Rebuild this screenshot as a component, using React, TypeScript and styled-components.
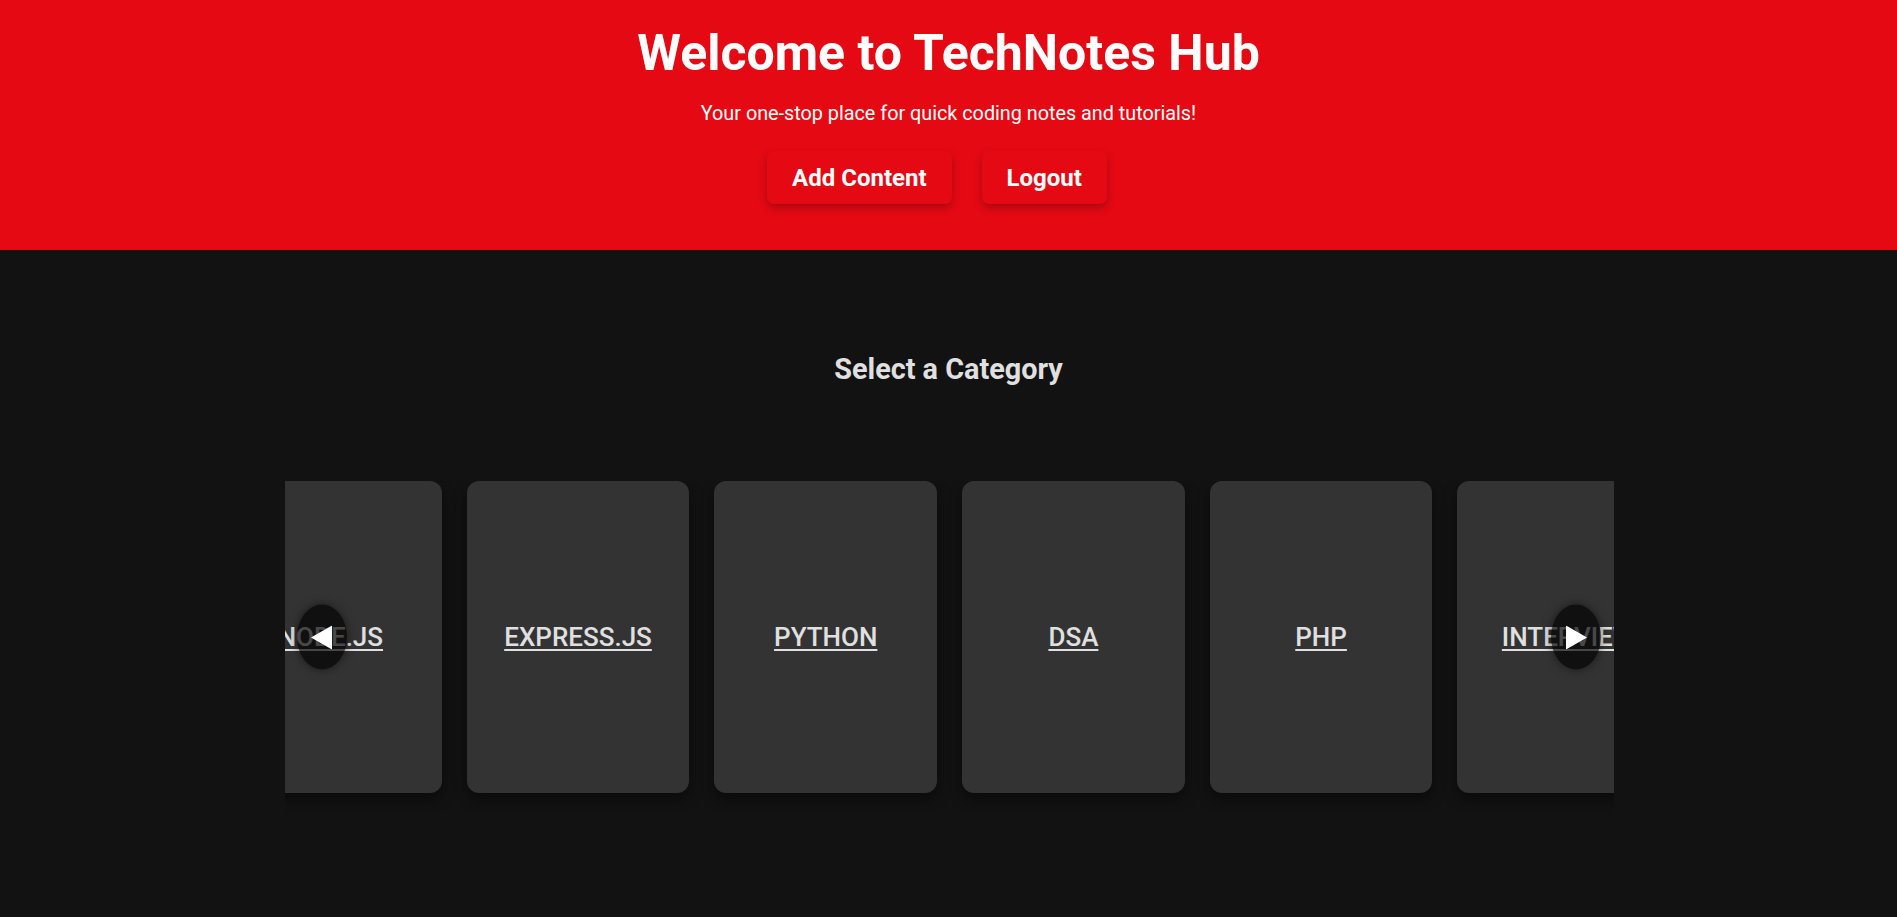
import React, { useLayoutEffect, useRef } from "react";
import styled, { createGlobalStyle } from "styled-components";

const GlobalStyle = createGlobalStyle`
  html, body {
    margin: 0;
    padding: 0;
    background: #121212;
    font-family: Roboto, "Noto Sans", Arial, sans-serif;
  }
  * { box-sizing: border-box; }
`;

const Page = styled.div`
  min-height: 917px;
  background: #121212;
  display: flex;
  flex-direction: column;
`;

const Header = styled.header`
  background: #e50914;
  display: flex;
  flex-direction: column;
  align-items: center;
  padding: 24px 20px 46px;
  color: #ffffff;
`;

const Title = styled.h1`
  margin: 0;
  font-size: 50px;
  font-weight: 700;
  line-height: normal;
`;

const Subtitle = styled.p`
  margin: 20px 0 0;
  font-size: 19.8px;
  font-weight: 400;
  line-height: normal;
`;

const Actions = styled.div`
  display: flex;
  gap: 30px;
  margin-top: 26px;
  padding-right: 23px;
`;

const HeaderButton = styled.button`
  height: 53px;
  padding: 0 25px;
  border: none;
  border-radius: 7px;
  background: #e50914;
  color: #ffffff;
  font-family: Roboto, Arial, sans-serif;
  font-size: 24px;
  font-weight: 700;
  box-shadow: 0 4px 8px rgba(0, 0, 0, 0.25);
  cursor: pointer;
`;

const Section = styled.section`
  display: flex;
  flex-direction: column;
  align-items: center;
  padding-top: 102px;
`;

const SectionTitle = styled.h2`
  margin: 0;
  font-size: 28.8px;
  font-weight: 700;
  line-height: normal;
  color: #e0e0e0;
`;

const CarouselFrame = styled.div`
  position: relative;
  width: 1329px;
  max-width: 100%;
  margin-top: 95px;
  margin-left: 2px;
`;

const Track = styled.div`
  display: flex;
  gap: 25px;
  overflow-x: auto;
  padding-bottom: 24px;
  scrollbar-width: none;
  &::-webkit-scrollbar { display: none; }
`;

const Card = styled.div`
  flex: 0 0 222.7px;
  height: 312px;
  border-radius: 12px;
  background: #333333;
  box-shadow: 0 6px 14px rgba(0, 0, 0, 0.45);
  display: flex;
  align-items: center;
  justify-content: center;
`;

const CardLink = styled.a`
  color: #e0e0e0;
  font-size: 26px;
  font-weight: 500;
  text-decoration: underline;
  text-underline-offset: 3px;
  white-space: nowrap;
`;

const ArrowButton = styled.button<{ $side: "left" | "right" }>`
  position: absolute;
  top: 156px;
  ${(p) => (p.$side === "left" ? "left: 12px;" : "right: 13px;")}
  transform: translateY(-50%);
  width: 50px;
  height: 65px;
  border: none;
  border-radius: 50%;
  background: rgba(0, 0, 0, 0.68);
  box-shadow: 0 0 10px rgba(0, 0, 0, 0.5);
  display: flex;
  align-items: center;
  justify-content: center;
  padding: 0;
  cursor: pointer;
`;

const categories = ["NODE.JS", "EXPRESS.JS", "PYTHON", "DSA", "PHP", "INTERVIEW"];

export default function App() {
  const trackRef = useRef<HTMLDivElement>(null);

  useLayoutEffect(() => {
    if (trackRef.current) trackRef.current.scrollLeft = 66;
  }, []);

  return (
    <>
      <GlobalStyle />
      <Page>
        <Header>
          <Title>Welcome to TechNotes Hub</Title>
          <Subtitle>Your one-stop place for quick coding notes and tutorials!</Subtitle>
          <Actions>
            <HeaderButton>Add Content</HeaderButton>
            <HeaderButton>Logout</HeaderButton>
          </Actions>
        </Header>
        <Section>
          <SectionTitle>Select a Category</SectionTitle>
          <CarouselFrame>
            <Track ref={trackRef}>
              {categories.map((c) => (
                <Card key={c}>
                  <CardLink href="#">{c}</CardLink>
                </Card>
              ))}
            </Track>
            <ArrowButton $side="left" aria-label="previous">
              <svg width="22" height="24" viewBox="0 0 22 24">
                <polygon points="0,12 21,0 21,24" fill="#ffffff" />
              </svg>
            </ArrowButton>
            <ArrowButton $side="right" aria-label="next">
              <svg width="22" height="24" viewBox="0 0 22 24">
                <polygon points="22,12 1,0 1,24" fill="#ffffff" />
              </svg>
            </ArrowButton>
          </CarouselFrame>
        </Section>
      </Page>
    </>
  );
}
